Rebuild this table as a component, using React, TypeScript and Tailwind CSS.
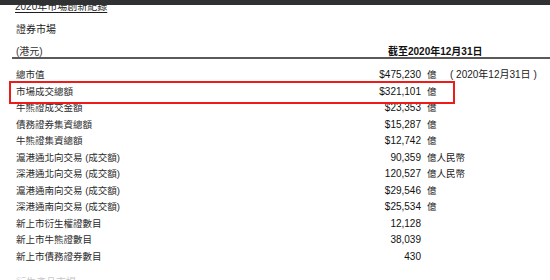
import React from "react";

type Row = { label: string; value: string; unit?: string; note?: string };

const rows: Row[] = [
  { label: "總市值", value: "$475,230", unit: "億", note: "( 2020年12月31日 )" },
  { label: "市場成交總額", value: "$321,101", unit: "億" },
  { label: "牛熊證成交金額", value: "$23,353", unit: "億" },
  { label: "債務證券集資總額", value: "$15,287", unit: "億" },
  { label: "牛熊證集資總額", value: "$12,742", unit: "億" },
  { label: "滬港通北向交易 (成交額)", value: "90,359", unit: "億人民幣" },
  { label: "深港通北向交易 (成交額)", value: "120,527", unit: "億人民幣" },
  { label: "滬港通南向交易 (成交額)", value: "$29,546", unit: "億" },
  { label: "深港通南向交易 (成交額)", value: "$25,534", unit: "億" },
  { label: "新上市衍生權證數目", value: "12,128" },
  { label: "新上市牛熊證數目", value: "38,039" },
  { label: "新上市債務證券數目", value: "430" },
];

export default function App() {
  return (
    <div
      className="relative w-[550px] h-[280px] overflow-hidden bg-white text-[#1e1e1e]"
      style={{ fontFamily: '"Liberation Sans", "Noto Sans CJK TC", sans-serif' }}
    >
      <div className="absolute top-0 left-0 right-0 h-[5px] bg-[#2f3133] z-10" />

      <div className="pl-[15px] -mt-[1px] h-[16px] leading-[16px] text-[10px] underline underline-offset-2">
        2020年市場創新紀錄
      </div>

      <div className="pl-[16px] mt-[7px] h-[16px] leading-[16px] text-[10px]">證券市場</div>

      <div className="ml-[12px] pl-[4px] mt-[6px] h-[15px] leading-[16px] border-b-2 border-[#5a5a5a] flex text-[10px]">
        <div className="w-[372px] shrink-0 text-[#333]">(港元)</div>
        <div className="whitespace-nowrap font-semibold text-[#111]">截至2020年12月31日</div>
      </div>

      <div className="mt-[8px]">
        {rows.map((r) => (
          <div key={r.label} className="flex pl-[16px] h-[16.5px] leading-[16.5px] whitespace-nowrap">
            <div className="w-[355px] shrink-0 text-[9.5px] text-[#2a2a2a]">{r.label}</div>
            <div className="w-[50px] shrink-0 text-right text-[10px] text-[#111]">{r.value}</div>
            <div className="ml-[6px] w-[23px] shrink-0 text-[9.5px] text-[#222]">{r.unit ?? ""}</div>
            {r.note && <div className="text-[10px] text-[#222]">{r.note}</div>}
          </div>
        ))}
      </div>

      <div className="pl-[16px] mt-[10px] h-[16px] leading-[16px] text-[10px] text-[#c8c8c8]">衍生產品市場</div>

      <div className="absolute left-[9px] top-[81px] w-[446px] h-[23px] border-2 border-[#ee1b1b]" />
    </div>
  );
}
